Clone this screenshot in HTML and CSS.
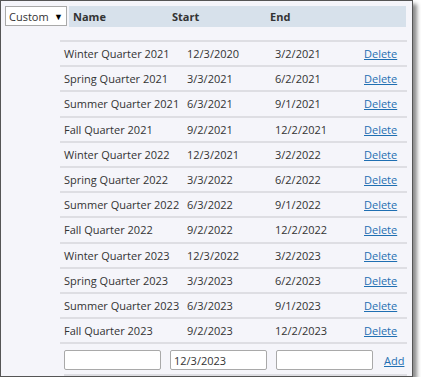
FILE: index.html
```html
<!DOCTYPE html>
<html lang="en">
<head>
    <meta charset="UTF-8">
    <title>Terms</title>
    <link rel="stylesheet" href="styles.css">
</head>
<body>
    <div class="window">
        <div class="top">
            <div class="select">Custom <span class="arrow">&#9660;</span></div>
            <div class="head">
                <span class="h-name">Name</span>
                <span class="h-start">Start</span>
                <span class="h-end">End</span>
            </div>
        </div>

        <table class="terms">
            <tbody>
                <tr><td>Winter Quarter 2021</td><td>12/3/2020</td><td>3/2/2021</td><td><a href="#">Delete</a></td></tr>
                <tr><td>Spring Quarter 2021</td><td>3/3/2021</td><td>6/2/2021</td><td><a href="#">Delete</a></td></tr>
                <tr><td>Summer Quarter 2021</td><td>6/3/2021</td><td>9/1/2021</td><td><a href="#">Delete</a></td></tr>
                <tr><td>Fall Quarter 2021</td><td>9/2/2021</td><td>12/2/2021</td><td><a href="#">Delete</a></td></tr>
                <tr><td>Winter Quarter 2022</td><td>12/3/2021</td><td>3/2/2022</td><td><a href="#">Delete</a></td></tr>
                <tr><td>Spring Quarter 2022</td><td>3/3/2022</td><td>6/2/2022</td><td><a href="#">Delete</a></td></tr>
                <tr><td>Summer Quarter 2022</td><td>6/3/2022</td><td>9/1/2022</td><td><a href="#">Delete</a></td></tr>
                <tr><td>Fall Quarter 2022</td><td>9/2/2022</td><td>12/2/2022</td><td><a href="#">Delete</a></td></tr>
                <tr><td>Winter Quarter 2023</td><td>12/3/2022</td><td>3/2/2023</td><td><a href="#">Delete</a></td></tr>
                <tr><td>Spring Quarter 2023</td><td>3/3/2023</td><td>6/2/2023</td><td><a href="#">Delete</a></td></tr>
                <tr><td>Summer Quarter 2023</td><td>6/3/2023</td><td>9/1/2023</td><td><a href="#">Delete</a></td></tr>
                <tr><td>Fall Quarter 2023</td><td>9/2/2023</td><td>12/2/2023</td><td><a href="#">Delete</a></td></tr>
            </tbody>
        </table>

        <div class="add-row">
            <input type="text" value="">
            <input type="text" value="12/3/2023">
            <input type="text" value="">
            <a href="#">Add</a>
        </div>
    </div>
</body>
</html>
```

FILE: styles.css
```css
/* --- base --- */
body {
    margin: 0;
    background: #ffffff;
    font-family: 'Open Sans', 'Liberation Sans', sans-serif;
    font-size: 11px;
    color: #333333;
}

a {
    color: #1f6fb2;
    text-decoration: underline;
}

/* --- window frame --- */
.window {
    width: 411px;
    height: 375px;
    border: 1px solid #555555;
    background: #f5f5fa;
    box-shadow: 4px 4px 4px rgba(0, 0, 0, 0.45);
    box-sizing: content-box;
}

/* --- top bar --- */
.top {
    display: flex;
    gap: 2px;
    padding: 5px 6px 0 4px;
}

.select {
    width: 54px;
    height: 18px;
    border: 1px solid #a9a9a9;
    background: #ffffff;
    display: flex;
    align-items: center;
    justify-content: space-between;
    padding: 0 3px 0 3px;
    box-sizing: content-box;
    font-size: 11px;
}

.arrow {
    font-size: 9px;
    color: #000000;
}

.head {
    flex: 1;
    height: 21px;
    background: #d7e1eb;
    font-weight: 700;
    display: flex;
    align-items: center;
}

.h-name { width: 99px; padding-left: 4px; }
.h-start { width: 98px; }
.h-end { width: 90px; }

/* --- rows --- */
.terms {
    margin: 13px 0 0 59px;
    width: 347px;
    border-collapse: collapse;
    border-top: 2px solid #dedee3;
}

.terms td {
    height: 23.2px;
    padding: 0 0 0 4px;
    border-bottom: 2px solid #dedee3;
    white-space: nowrap;
}

.terms td:nth-child(1) { width: 119px; }
.terms td:nth-child(2) { width: 84px; }
.terms td:nth-child(3) { width: 85px; }

/* --- add form --- */
.add-row {
    display: flex;
    align-items: center;
    gap: 9px;
    margin-left: 63px;
    margin-right: 5px;
    padding: 6px 0 4px 0;
    border-bottom: 2px solid #dedee3;
}

.add-row input {
    width: 97px;
    height: 20px;
    box-sizing: border-box;
    border: 1px solid #a9a9a9;
    border-radius: 2px;
    background: #ffffff;
    font-family: inherit;
    font-size: 11px;
    color: #333333;
    padding: 0 3px;
    margin: 0;
}

.add-row a {
    margin-left: 2px;
}
```
